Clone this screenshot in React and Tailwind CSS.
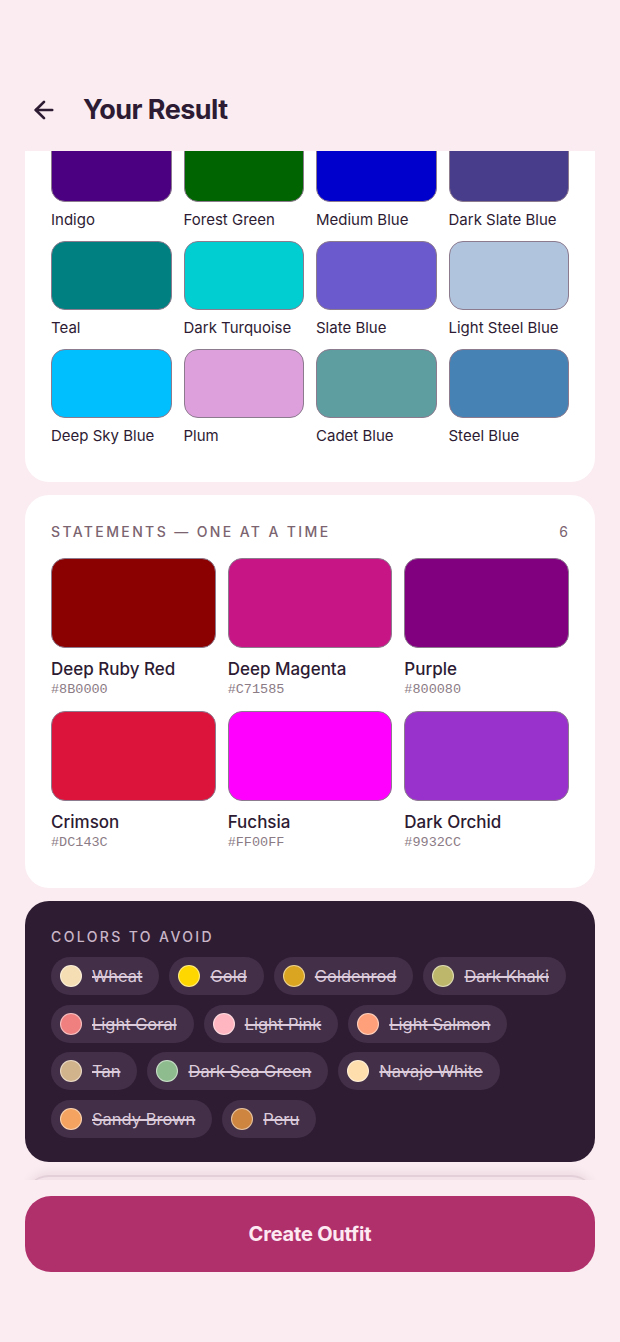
import React from "react";
import { ArrowLeft } from "lucide-react";

const best = [
  ["Indigo", "#4B0082"],
  ["Forest Green", "#006400"],
  ["Medium Blue", "#0000CD"],
  ["Dark Slate Blue", "#483D8B"],
  ["Teal", "#008080"],
  ["Dark Turquoise", "#00CED1"],
  ["Slate Blue", "#6A5ACD"],
  ["Light Steel Blue", "#B0C4DE"],
  ["Deep Sky Blue", "#00BFFF"],
  ["Plum", "#DDA0DD"],
  ["Cadet Blue", "#5F9EA0"],
  ["Steel Blue", "#4682B4"],
];

const statements = [
  ["Deep Ruby Red", "#8B0000"],
  ["Deep Magenta", "#C71585"],
  ["Purple", "#800080"],
  ["Crimson", "#DC143C"],
  ["Fuchsia", "#FF00FF"],
  ["Dark Orchid", "#9932CC"],
];

const avoid = [
  ["Wheat", "#F5DEB3"],
  ["Gold", "#FFD700"],
  ["Goldenrod", "#DAA520"],
  ["Dark Khaki", "#BDB76B"],
  ["Light Coral", "#F08080"],
  ["Light Pink", "#FFB6C1"],
  ["Light Salmon", "#FFA07A"],
  ["Tan", "#D2B48C"],
  ["Dark Sea Green", "#8FBC8F"],
  ["Navajo White", "#FFDEAD"],
  ["Sandy Brown", "#F4A460"],
  ["Peru", "#CD853F"],
];

export default function App() {
  return (
    <div className="h-[1342px] w-full bg-[#faecf1] flex flex-col overflow-hidden font-['Inter',sans-serif] text-[#2d1b33]">
      <header className="h-[151px] shrink-0 flex items-start pt-[88px] pl-[30px]">
        <div className="h-[44px] flex items-center gap-[25px]">
          <ArrowLeft size={28} strokeWidth={2.3} className="text-[#2d1b33]" />
          <h1 className="text-[27px] font-bold tracking-[-0.02em] leading-[36px]">Your Result</h1>
        </div>
      </header>

      <main className="flex-1 overflow-hidden px-[25px]">
        <div className="mt-[-50px] flex flex-col gap-[13px]">
          <section className="bg-white rounded-[24px] px-[26px] pt-[32px] pb-[36px]">
            <div className="grid grid-cols-4 gap-x-[12px] gap-y-[11px]">
              {best.map(([name, hex]) => (
                <div key={name} className="flex flex-col gap-[8px]">
                  <div
                    className="h-[69px] rounded-[14px] border-[1.5px] border-[#8c7a8e]"
                    style={{ backgroundColor: hex }}
                  />
                  <span className="text-[15px] leading-[20px] whitespace-nowrap">{name}</span>
                </div>
              ))}
            </div>
          </section>

          <section className="bg-white rounded-[24px] px-[26px] pt-[28px] pb-[36px]">
            <div className="flex items-center justify-between mb-[17px] h-[18px]">
              <span className="text-[14px] leading-[18px] font-medium tracking-[0.17em] text-[#7b6470]">
                STATEMENTS — ONE AT A TIME
              </span>
              <span className="text-[14px] leading-[18px] text-[#7b6470] pr-[1px]">6</span>
            </div>
            <div className="grid grid-cols-3 gap-x-[12px] gap-y-[12px]">
              {statements.map(([name, hex]) => (
                <div key={name} className="flex flex-col">
                  <div
                    className="h-[90px] rounded-[14px] border-[1.5px] border-[#8c7a8e]"
                    style={{ backgroundColor: hex }}
                  />
                  <span className="mt-[9px] text-[17px] leading-[24px] font-medium">{name}</span>
                  <span className="text-[13.5px] leading-[18px] font-['Liberation_Mono',monospace] text-[#8b7b85]">
                    {hex}
                  </span>
                </div>
              ))}
            </div>
          </section>

          <section className="bg-[#2e1c33] rounded-[24px] px-[26px] pt-[27px] pb-[24px]">
            <div className="text-[14px] leading-[18px] font-medium tracking-[0.17em] text-[#c9b6c8] mb-[11px]">
              COLORS TO AVOID
            </div>
            <div className="flex flex-wrap gap-x-[10px] gap-y-[9.5px]">
              {avoid.map(([name, hex]) => (
                <div
                  key={name}
                  className="h-[38px] rounded-full bg-[#433048] flex items-center pl-[9px] pr-[17px] gap-[10px]"
                >
                  <span
                    className="w-[22px] h-[22px] shrink-0 rounded-full border-[1.5px] border-white/50"
                    style={{ backgroundColor: hex }}
                  />
                  <span className="text-[16.5px] leading-[20px] text-[#dccbdb] line-through decoration-[1.5px] whitespace-nowrap">
                    {name}
                  </span>
                </div>
              ))}
            </div>
          </section>

          <section className="bg-[#f3e3e9] rounded-t-[24px] h-[40px] border-t-[2px] border-[#e2cfd7] shadow-[0_-4px_10px_rgba(60,20,40,0.06)]" />
        </div>
      </main>

      <footer className="h-[162px] shrink-0 bg-[#faecf1] px-[25px] pt-[16px]">
        <button className="w-full h-[76px] rounded-[26px] bg-[#b0306b] text-[#fde9f2] text-[20px] font-bold tracking-[-0.01em] font-['Inter',sans-serif]">
          Create Outfit
        </button>
      </footer>
    </div>
  );
}
